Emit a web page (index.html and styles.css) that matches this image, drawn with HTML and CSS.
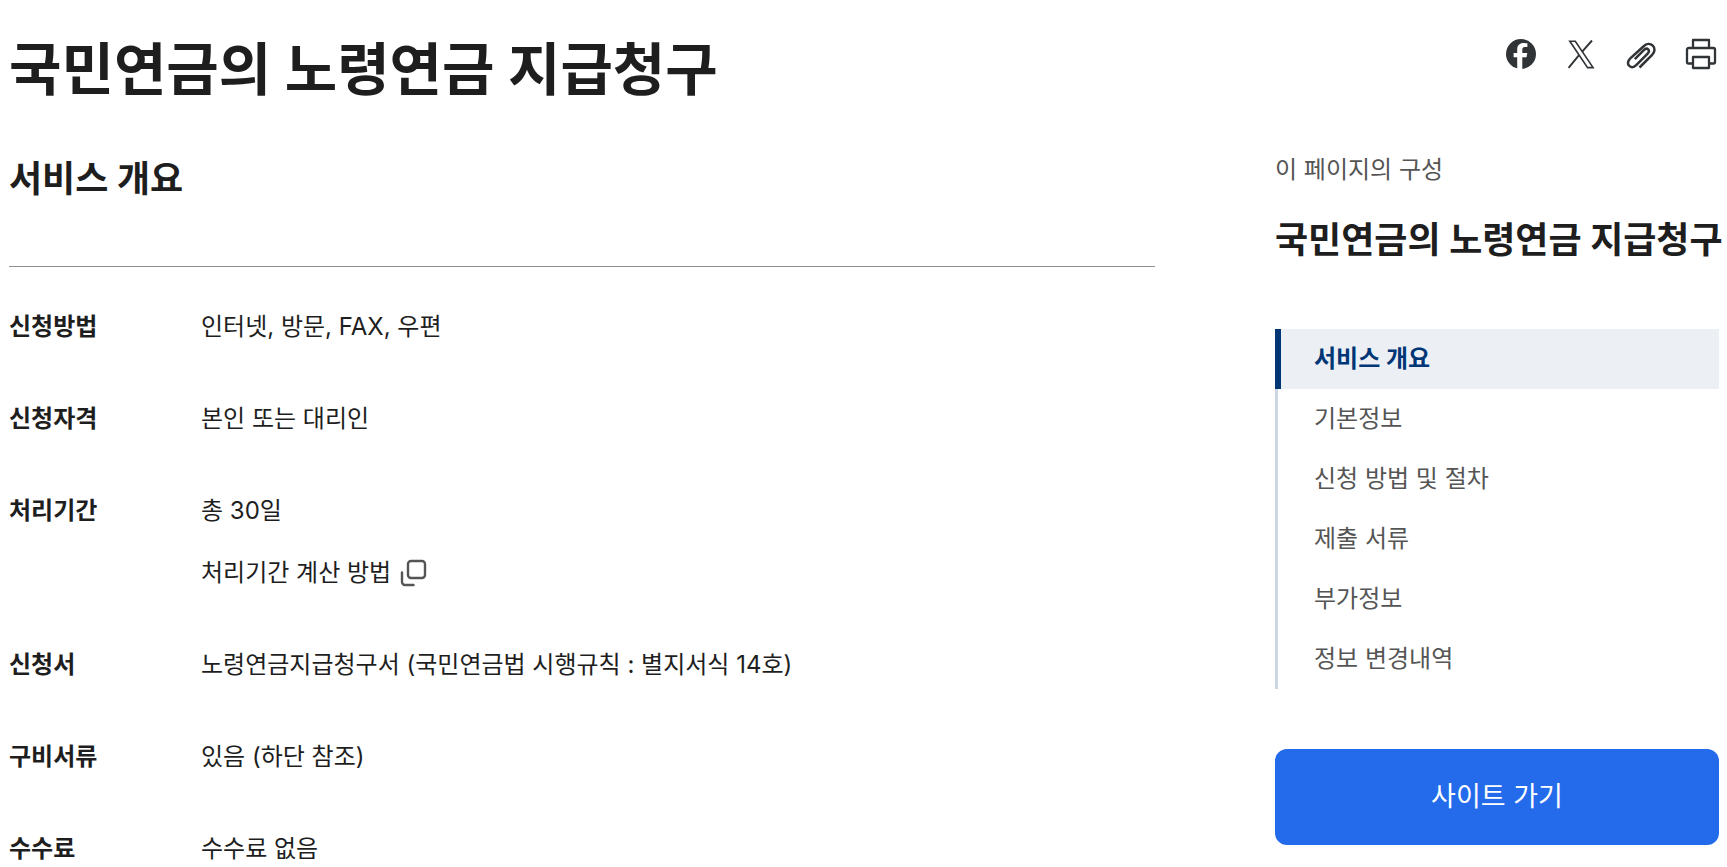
FILE: index.html
```html
<!DOCTYPE html>
<html lang="ko">
<head>
<meta charset="utf-8">
<meta name="viewport" content="width=device-width, initial-scale=1">
<title>국민연금의 노령연금 지급청구</title>
<link rel="stylesheet" href="styles.css">
</head>
<body>
<header class="page-header">
  <h1 class="page-title">국민연금의 노령연금 지급청구</h1>
  <div class="share">
    <button class="icon-button" type="button" aria-label="페이스북 공유">
      <svg viewBox="0 0 36 36" aria-hidden="true"><circle cx="18" cy="18" r="15" fill="#303437"/><path d="M14.2 34V21.200h-3.600v-4.300h3.600v-3.300c0-4.500 2.500-6.700 6.400-6.700 1.500 0 2.900.2 3.800.4v3.800h-2.400c-2.200 0-2.700 1.300-2.700 2.700v3.100h5l-.8 4.300h-4.200V34z" fill="#fff"/></svg>
    </button>
    <button class="icon-button" type="button" aria-label="X 공유">
      <svg viewBox="0 0 36 36" aria-hidden="true"><g fill="none" stroke="#303437"><path d="M6.800 5.200h5.500l17.800 26.400h-5.500z" stroke-width="1.600"/><path d="M29 4.500 19.200 15.700M16 19.200 5.600 31.800" stroke-width="1.900"/></g></svg>
    </button>
    <button class="icon-button" type="button" aria-label="주소 복사">
      <svg viewBox="0 0 36 36" aria-hidden="true"><path d="M16.500 31.500 28.900 19.100c3.200-3.200 3.400-7 .9-9.400-2.500-2.500-6.300-2.300-9.400.8L7.300 22.400c-2.800 2.800-3 5.700-1 7.500 2 1.800 4.700 1.500 6.900-.7L24.400 17.900c1.800-1.800 1.900-3.400.8-4.500-1.100-1.100-2.800-.9-4.400.7L11.800 23.100" fill="none" stroke="#303437" stroke-width="2.500"/></svg>
    </button>
    <button class="icon-button" type="button" aria-label="인쇄">
      <svg viewBox="0 0 36 36" aria-hidden="true"><g fill="none" stroke="#303437" stroke-width="2.300" stroke-linejoin="round"><path d="M10 12V4h16v8M10 27.500H5.500a1.500 1.500 0 0 1-1.500-1.500V13.500A1.500 1.500 0 0 1 5.500 12h25a1.500 1.500 0 0 1 1.500 1.500V26a1.500 1.500 0 0 1-1.500 1.500H26"/><path d="M10 21h16v11H10z"/></g></svg>
    </button>
  </div>
</header>
<div class="layout">
  <main>
    <h2 class="section-title">서비스 개요</h2>
    <dl class="summary">
      <div class="summary-row"><dt>신청방법</dt><dd>인터넷, 방문, FAX, 우편</dd></div>
      <div class="summary-row"><dt>신청자격</dt><dd>본인 또는 대리인</dd></div>
      <div class="summary-row"><dt>처리기간</dt>
        <dd class="stacked">
          <span>총 30일</span>
          <button class="guide-button" type="button">처리기간 계산 방법
            <svg class="guide-icon" viewBox="0 0 28 28" aria-hidden="true"><g fill="none" stroke="#555" stroke-width="2.400" stroke-linecap="round"><rect x="9" y="2" width="17" height="17" rx="3"/><path d="M3 13.500V23a3 3 0 0 0 3 3h8.500"/></g></svg>
          </button>
        </dd>
      </div>
      <div class="summary-row"><dt>신청서</dt><dd>노령연금지급청구서 (국민연금법 시행규칙 : 별지서식 14호)</dd></div>
      <div class="summary-row"><dt>구비서류</dt><dd>있음 (하단 참조)</dd></div>
      <div class="summary-row"><dt>수수료</dt><dd>수수료 없음</dd></div>
    </dl>
  </main>
  <aside>
    <p class="toc-caption">이 페이지의 구성</p>
    <h2 class="toc-title">국민연금의 노령연금 지급청구</h2>
    <nav class="toc" aria-label="이 페이지의 구성">
      <a class="toc-link active" href="#overview" aria-current="true">서비스 개요</a>
      <a class="toc-link" href="#basic">기본정보</a>
      <a class="toc-link" href="#process">신청 방법 및 절차</a>
      <a class="toc-link" href="#documents">제출 서류</a>
      <a class="toc-link" href="#extra">부가정보</a>
      <a class="toc-link" href="#history">정보 변경내역</a>
    </nav>
    <button class="site-button" type="button">사이트 가기</button>
  </aside>
</div>
</body>
</html>
```
FILE: styles.css
```css
* {
  box-sizing: border-box;
}

body {
  margin: 0;
  padding: 0 8px 0 9px;
  background: #fff;
  color: #1e1e1e;
  font-family: "Inter", "Noto Sans CJK KR", sans-serif;
  font-size: 24px;
  line-height: 36px;
  word-break: keep-all;
}

h1, h2, p, dl, dd {
  margin: 0;
}

button {
  padding: 0;
  border: 0;
  background: none;
  color: inherit;
  font: inherit;
  cursor: pointer;
}

.page-header {
  display: flex;
  justify-content: space-between;
  align-items: flex-start;
  gap: 24px;
  padding-top: 28px;
}

.page-title {
  font-size: 57px;
  line-height: 84px;
}

.share {
  display: flex;
  gap: 24px;
  padding-top: 8px;
}

.icon-button,
.icon-button svg {
  display: block;
  width: 36px;
  height: 36px;
}

.layout {
  display: grid;
  grid-template-columns: minmax(0, 1fr) 444px;
  gap: 120px;
  padding-top: 40px;
}

.section-title {
  padding-bottom: 60px;
  border-bottom: 1px solid #8e8e8e;
  font-size: 36px;
  line-height: 54px;
}

.summary {
  display: grid;
  gap: 56px;
  padding-top: 42px;
}

.summary-row {
  display: grid;
  grid-template-columns: 192px minmax(0, 1fr);
}

.summary-row dt {
  font-weight: 700;
}

.stacked {
  display: grid;
  justify-items: start;
  gap: 26px;
}

.guide-button {
  display: flex;
  align-items: center;
  gap: 8px;
}

.guide-icon {
  width: 28px;
  height: 28px;
}

.toc-caption {
  color: #555;
}

.toc-title {
  margin-top: 25px;
  font-size: 36px;
  line-height: 54px;
  white-space: nowrap;
}

.toc {
  margin-top: 62px;
  background: linear-gradient(#cdd7e4, #cdd7e4) left / 3px 100% no-repeat;
}

.toc-link {
  display: block;
  padding: 12px 0 12px 39px;
  color: #555;
  text-decoration: none;
}

.toc-link.active {
  padding-left: 33px;
  border-left: 6px solid #003675;
  background: #ecf0f5;
  color: #003675;
  font-weight: 700;
}

.site-button {
  width: 100%;
  height: 96px;
  margin-top: 60px;
  border-radius: 12px;
  background: #246beb;
  color: #fff;
  font-size: 27px;
}
```
